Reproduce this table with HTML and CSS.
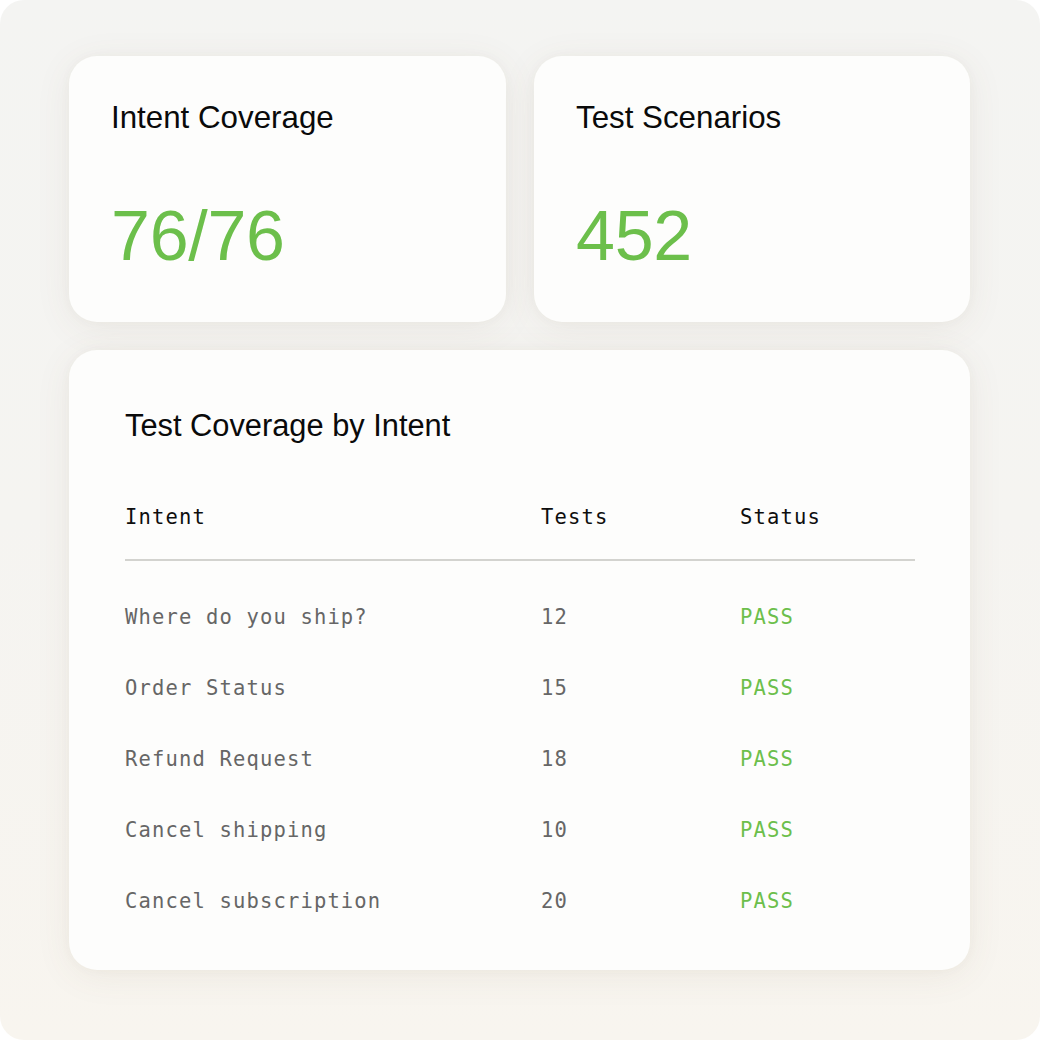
FILE: index.html
```html
<!DOCTYPE html>
<html lang="en">
<head>
<meta charset="utf-8">
<title>Test Coverage</title>
<link rel="stylesheet" href="styles.css">
</head>
<body>
<div class="panel">
  <div class="grid">
    <section class="card stat">
      <h2 class="stat-title">Intent Coverage</h2>
      <div class="stat-value">76/76</div>
    </section>
    <section class="card stat">
      <h2 class="stat-title">Test Scenarios</h2>
      <div class="stat-value">452</div>
    </section>
    <section class="card table-card">
      <h2 class="table-title">Test Coverage by Intent</h2>
      <div class="table">
        <div class="row head">
          <span>Intent</span><span>Tests</span><span>Status</span>
        </div>
        <div class="body">
          <div class="row"><span>Where do you ship?</span><span>12</span><span class="pass">PASS</span></div>
          <div class="row"><span>Order Status</span><span>15</span><span class="pass">PASS</span></div>
          <div class="row"><span>Refund Request</span><span>18</span><span class="pass">PASS</span></div>
          <div class="row"><span>Cancel shipping</span><span>10</span><span class="pass">PASS</span></div>
          <div class="row"><span>Cancel subscription</span><span>20</span><span class="pass">PASS</span></div>
        </div>
      </div>
    </section>
  </div>
</div>
</body>
</html>
```
FILE: styles.css
```css
html, body {
  margin: 0;
  padding: 0;
  background: #ffffff;
}
.panel {
  width: 1040px;
  height: 1040px;
  box-sizing: border-box;
  border-radius: 24px;
  background: linear-gradient(180deg, #f4f4f2 0%, #f5f4f1 50%, #f8f5ef 100%);
  padding: 56px 70px 70px 69px;
  font-family: "Liberation Sans", Arial, sans-serif;
}
.grid {
  display: grid;
  grid-template-columns: 437px 436px;
  column-gap: 28px;
  row-gap: 28px;
}
.card {
  background: #fdfdfc;
  border-radius: 28px;
  box-shadow: 0 6px 36px rgba(110, 95, 70, 0.08), 0 0 12px rgba(110, 95, 70, 0.03);
}
.stat {
  height: 266px;
  box-sizing: border-box;
  padding: 46px 42px 0 42px;
}
.stat-title {
  margin: 0;
  font-weight: 400;
  font-size: 31.3px;
  line-height: 31px;
  color: #0a0a0a;
}
.stat-value {
  margin-top: 68px;
  font-size: 70px;
  line-height: 70px;
  color: #6cbf4b;
  letter-spacing: -0.3px;
}
.table-card {
  grid-column: 1 / 3;
  height: 620px;
  box-sizing: border-box;
  padding: 61px 55px 0 56px;
}
.table-title {
  margin: 0;
  font-weight: 400;
  font-size: 30.8px;
  line-height: 30.5px;
  color: #0a0a0a;
}
.table {
  margin-top: 63.5px;
  font-family: "DejaVu Sans Mono", "Liberation Mono", monospace;
  font-size: 20.5px;
  letter-spacing: 1.15px;
}
.row {
  display: grid;
  grid-template-columns: 416px 199px 1fr;
  height: 71px;
  line-height: 71px;
  color: #666666;
}
.row.head {
  height: 24px;
  line-height: 24px;
  padding-bottom: 30px;
  border-bottom: 2px solid #d3d3cf;
  color: #0e0e0e;
}
.body {
  padding-top: 21px;
}
.pass {
  color: #6cbf4b;
}
```
